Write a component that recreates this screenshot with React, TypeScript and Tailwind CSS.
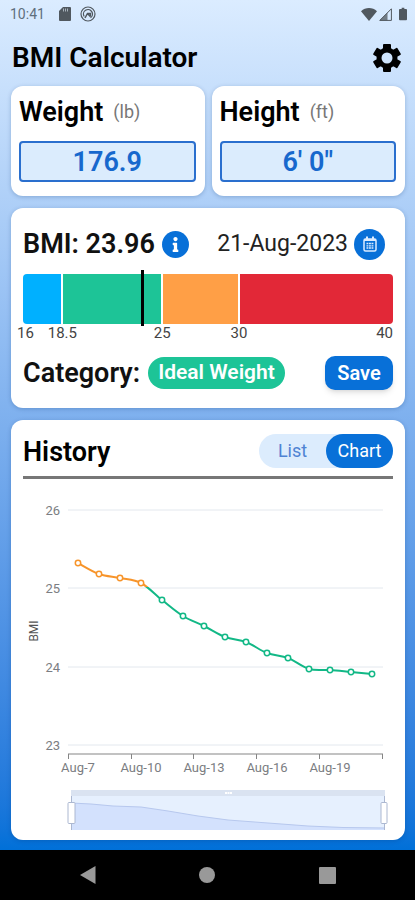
import { useState } from "react";
import { FaInfo } from "react-icons/fa";

const RANGES = [
  { name: "Underweight", className: "grow-[38] bg-[#00b0ff] rounded-l" },
  { name: "Ideal Weight", className: "grow-[98] bg-[#1dc497]" },
  { name: "Overweight", className: "grow-[75] bg-[#ff9f46]" },
  { name: "Obese", className: "grow-[153] bg-[#e22837] rounded-r" },
];

const HISTORY = [
  [55, 84], [76, 95], [97, 99], [118, 104], [139, 121], [160, 137], [181, 147], [202, 158],
  [223, 163], [244, 174], [265, 179], [286, 190], [307, 191], [328, 193], [349, 195],
];

const GRID = [
  { label: "26", y: 31 },
  { label: "25", y: 109 },
  { label: "24", y: 188 },
  { label: "23", y: 266 },
];

const DATES = [
  { label: "Aug-7", x: 55 },
  { label: "Aug-10", x: 118 },
  { label: "Aug-13", x: 181 },
  { label: "Aug-16", x: 244 },
  { label: "Aug-19", x: 307 },
];

const Card = ({ children, className = "" }: { children: React.ReactNode; className?: string }) => (
  <section className={`rounded-xl bg-white shadow-[0_1px_4px_rgba(0,50,110,0.25)] ${className}`}>{children}</section>
);

const StatusBar = () => (
  <div className="flex h-7 items-center justify-between pl-[10px] pr-2 text-[#5f6f7d]">
    <div className="flex items-center">
      <span className="text-sm">10:41</span>
      <svg viewBox="0 0 12 14" className="ml-[14px] h-[14px] w-3">
        <path d="M4 0h7a1 1 0 0 1 1 1v12a1 1 0 0 1-1 1H1a1 1 0 0 1-1-1V4z" fill="#50585f" />
        <path d="M4.5 1.5v3M6.5 1.5v3M8.5 1.5v3" stroke="#a8b3bd" />
      </svg>
      <svg viewBox="0 0 16 16" className="ml-[9px] size-4" fill="none" stroke="#50585f">
        <circle cx="8" cy="8" r="7" strokeWidth="1.2" />
        <path d="M4.2 10.5A4.5 4.5 0 1 1 10.5 11.8" strokeWidth="1.3" />
        <path d="M5 12l2.5-4.5h3v3M7.5 7.5l3 3.2" strokeWidth="1.5" />
      </svg>
    </div>
    <div className="flex items-center text-[#50585f]">
      <svg viewBox="0 0 16 13" className="h-[13px] w-4" fill="currentColor">
        <path d="M8 13L0 3.2C4.5-1 11.500-1 16 3.200z" />
      </svg>
      <svg viewBox="0 0 13 13" className="ml-[2px] size-[13px]">
        <path d="M12.400.8v11.600H.8z" fill="none" stroke="currentColor" />
        <path d="M8.500 4.500v8H.5z" fill="currentColor" opacity=".75" />
      </svg>
      <svg viewBox="0 0 9 14" className="ml-[7px] h-[14px] w-2" fill="currentColor">
        <path d="M3 0h3v1.500h2a1 1 0 0 1 1 1V13a1 1 0 0 1-1 1H1a1 1 0 0 1-1-1V2.500a1 1 0 0 1 1-1h2z" />
      </svg>
    </div>
  </div>
);

const GearIcon = () => (
  <svg viewBox="-14 -14 28 28" className="size-7">
    <mask id="gear-hole">
      <rect x="-14" y="-14" width="28" height="28" fill="#fff" />
      <circle r="5.500" fill="#000" />
    </mask>
    <g mask="url(#gear-hole)">
      <circle r="10.500" />
      <rect x="-4" y="-14" width="8" height="28" rx="1" />
      <rect x="-4" y="-14" width="8" height="28" rx="1" transform="rotate(60)" />
      <rect x="-4" y="-14" width="8" height="28" rx="1" transform="rotate(120)" />
    </g>
  </svg>
);

const Measure = ({ id, label, unit, value }: { id: string; label: string; unit: string; value: string }) => (
  <Card className="pt-2 pr-[9px] pb-[14px] pl-2">
    <label htmlFor={id} className="flex h-9 items-center gap-[10px] text-[27px] font-semibold text-black">
      {label} <span className="text-lg font-normal text-[#777]">({unit})</span>
    </label>
    <input
      id={id}
      defaultValue={value}
      className="mt-[11px] block h-[41px] w-full rounded border-2 border-[#2a6fce] bg-[#dbecfd] text-center text-[27px] font-semibold text-[#1768cd]"
    />
  </Card>
);

const HistoryChart = () => {
  // smooth the line by easing horizontally between neighbours
  const path = (points: number[][]) =>
    points
      .map(([x, y], i) => {
        if (i === 0) return `M${x} ${y}`;
        const before = points[Math.max(i - 2, 0)];
        const prev = points[i - 1];
        const next = points[Math.min(i + 1, points.length - 1)];
        return `C${prev[0] + (x - before[0]) / 6} ${prev[1] + (y - before[1]) / 6} ${x - (next[0] - prev[0]) / 6} ${y - (next[1] - prev[1]) / 6} ${x} ${y}`;
      })
      .join("");

  return (
    <svg viewBox="0 0 370 352" className="block h-auto w-full" role="img" aria-label="BMI history chart">
      <defs>
        <linearGradient id="range" gradientUnits="userSpaceOnUse" x1="0" y1="0" x2="0" y2="352">
          <stop offset="0.308" stopColor="#f7942a" />
          <stop offset="0.308" stopColor="#12b886" />
        </linearGradient>
      </defs>
      {GRID.map(({ label, y }) => (
        <g key={label}>
          <path d={`M45 ${y}H360`} stroke="#e3e8ee" />
          <text x="37" y={y + 5} textAnchor="end" fontSize="13" fill="#7b7d82">{label}</text>
        </g>
      ))}
      <text transform="translate(15 152) rotate(-90)" textAnchor="middle" fontSize="12" fill="#555">BMI</text>
      <path d="M45 275H360M45.500 275v5M108.500 275v5M170.500 275v5M233.500 275v5M296.500 275v5M359.500 275v5" stroke="#858585" fill="none" />
      {DATES.map(({ label, x }) => (
        <text key={label} x={x} y="293" textAnchor="middle" fontSize="13" fill="#7b7d82">{label}</text>
      ))}
      <path d={path(HISTORY)} fill="none" stroke="url(#range)" strokeWidth="2" />
      {HISTORY.map(([x, y]) => (
        <circle key={x} cx={x} cy={y} r="2.700" fill="#fff" stroke={y < 108 ? "#f7942a" : "#12b886"} strokeWidth="1.500" />
      ))}

      {/* zoom slider */}
      <path d="M48 311H362V351H48z" fill="#e6f0fe" />
      <path d="M48 311H362V317H48z" fill="#dae3f1" />
      <path d="M48 324L68 325L90 327L118 328L145 332L175 337L205 341L245 344L285 347L320 348.500L362 349V351H48z" fill="#d3e1fd" />
      <path d="M48 324L68 325L90 327L118 328L145 332L175 337L205 341L245 344L285 347L320 348.500L362 349" fill="none" stroke="#b7c8ee" />
      <path d="M202 314h7" stroke="#fff" strokeWidth="2" strokeDasharray="2 .5" />
      <path d="M48.500 317V351M361.500 317V351" stroke="#acb8d1" />
      <rect x="45" y="323.500" width="7" height="21" rx="1" fill="#fff" stroke="#acb8d1" />
      <rect x="358" y="323.500" width="6" height="21" rx="1" fill="#fff" stroke="#acb8d1" />
    </svg>
  );
};

export default function App() {
  const [view, setView] = useState("Chart");

  return (
    <div className="flex min-h-screen flex-col bg-black font-[Roboto,sans-serif]">
      <main className="grow bg-linear-to-b from-[#dbecff] to-[#0070d8] pb-[10px]">
        <StatusBar />
        <header className="flex h-[58px] items-center justify-between pt-[2px] pr-[14px] pl-3 text-black">
          <h1 className="text-[28px] font-semibold">BMI Calculator</h1>
          <button aria-label="Settings">
            <GearIcon />
          </button>
        </header>

        <div className="flex flex-col gap-3 pr-[10px] pl-[11px]">
          <div className="grid grid-cols-2 gap-[7px]">
            <Measure id="weight" label="Weight" unit="lb" value="176.9" />
            <Measure id="height" label="Height" unit="ft" value={`6' 0"`} />
          </div>

          <Card className="px-3 pt-[18px] pb-[18px]">
            <div className="flex h-9 items-center justify-between">
              <div className="flex items-center gap-[7px]">
                <h2 className="text-[27px] font-semibold text-[#111]">BMI: 23.96</h2>
                <button aria-label="About BMI" className="flex size-[27px] items-center justify-center rounded-full bg-[#0870d8] text-white">
                  <FaInfo className="size-[15px]" />
                </button>
              </div>
              <div className="mr-2 flex items-center gap-[6px]">
                <span className="text-[23px] text-[#222]">21-Aug-2023</span>
                <button aria-label="Pick date" className="flex size-[31px] items-center justify-center rounded-full bg-[#0870d8]">
                  <svg viewBox="0 0 14 16" className="h-4 w-[14px]" fill="none" stroke="#dcecff">
                    <rect x="1" y="3" width="12" height="12" rx="1.500" strokeWidth="1.500" />
                    <path d="M1 4h12" strokeWidth="2" />
                    <path d="M4 .5v3M10 .5v3" strokeWidth="2" />
                    <path d="M3.500 7.500h7M3.500 9.800h7M3.500 12h7" strokeWidth="1.300" strokeDasharray="1.900 .6" />
                  </svg>
                </button>
              </div>
            </div>

            <div className="relative mt-3 flex h-[50px] gap-[2px]">
              {RANGES.map((r) => (
                <div key={r.name} title={r.name} className={`basis-0 ${r.className}`} />
              ))}
              <div className="absolute -top-1 left-[32%] h-[56px] w-[3px] bg-black" />
            </div>
            <div className="-mr-2 -ml-[6px] flex h-[18px] items-center text-[15px] text-[#444]">
              <span className="w-[8%]">16</span>
              <span className="w-[8%]">18.5</span>
              <span className="w-[24%] text-right">25</span>
              <span className="w-[20%] text-right">30</span>
              <span className="grow pr-2 text-right">40</span>
            </div>

            <div className="mt-[14px] flex h-[34px] items-center">
              <span className="text-[27px] font-semibold text-[#111]">Category:</span>
              <span className="ml-2 flex h-8 items-center rounded-full bg-[#1dc497] px-[10px] text-[21px] font-semibold text-white">
                Ideal Weight
              </span>
              <button className="ml-auto h-[34px] w-[68px] rounded-[10px] bg-[#0870d8] text-xl font-semibold text-white shadow-md">
                Save
              </button>
            </div>
          </Card>

          <Card className="px-3 pt-[14px] pb-[9px]">
            <div className="flex items-start justify-between border-b-[3px] border-[#777] pb-[6px]">
              <h2 className="text-[27px] leading-9 font-semibold text-black">History</h2>
              <div className="flex h-[34px] rounded-full bg-[#dcecfd] text-lg">
                {["List", "Chart"].map((name) => (
                  <button
                    key={name}
                    aria-pressed={view === name}
                    onClick={() => setView(name)}
                    className={`w-[67px] rounded-full ${view === name ? "bg-[#0870d8] text-white" : "text-[#4f83d3]"}`}
                  >
                    {name}
                  </button>
                ))}
              </div>
            </div>
            <HistoryChart />
          </Card>
        </div>
      </main>

      <nav className="grid h-[50px] grid-cols-3 place-items-center bg-black px-7">
        <button aria-label="Back">
          <svg viewBox="0 0 16 18" className="h-[18px] w-4" fill="#999">
            <path d="M15.500 0v18L0 9z" />
          </svg>
        </button>
        <button aria-label="Home" className="size-4 rounded-full bg-[#999]" />
        <button aria-label="Recent apps" className="size-[17px] rounded-[1px] bg-[#999]" />
      </nav>
    </div>
  );
}
